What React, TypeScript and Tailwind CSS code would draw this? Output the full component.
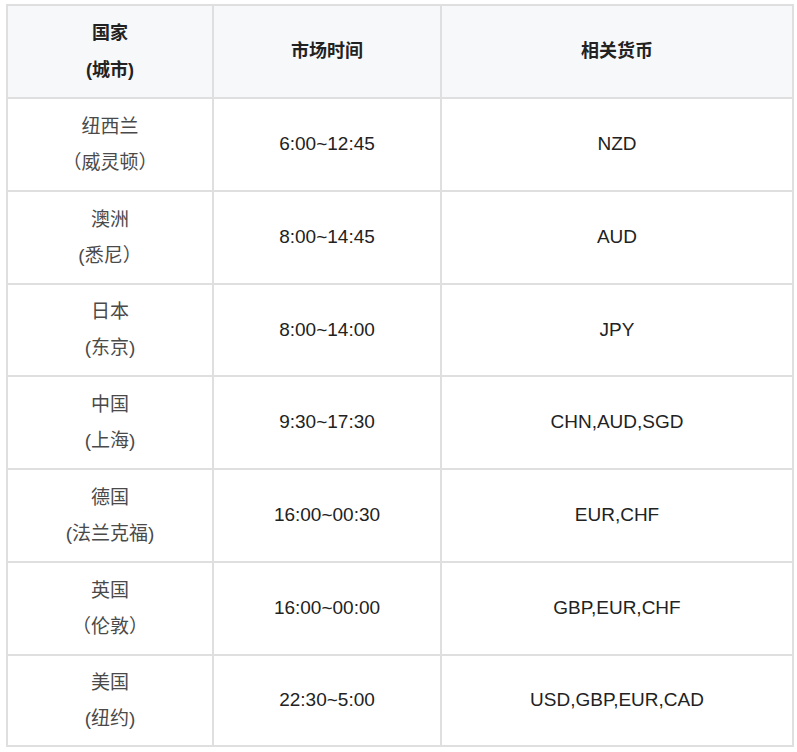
const rows = [
  { country: '纽西兰', city: '（威灵顿）', hours: '6:00~12:45', currency: 'NZD', h: 'h-[93px]' },
  { country: '澳洲', city: '(悉尼）', hours: '8:00~14:45', currency: 'AUD', h: 'h-[93px]' },
  { country: '日本', city: '(东京)', hours: '8:00~14:00', currency: 'JPY', h: 'h-[92px]' },
  { country: '中国', city: '(上海)', hours: '9:30~17:30', currency: 'CHN,AUD,SGD', h: 'h-[93px]' },
  { country: '德国', city: '(法兰克福)', hours: '16:00~00:30', currency: 'EUR,CHF', h: 'h-[93px]' },
  { country: '英国', city: '（伦敦）', hours: '16:00~00:00', currency: 'GBP,EUR,CHF', h: 'h-[93px]' },
  { country: '美国', city: '(纽约)', hours: '22:30~5:00', currency: 'USD,GBP,EUR,CAD', h: 'h-[91px]' },
];

export default function App() {
  return (
    <div className="min-h-screen bg-white pl-[6px] pt-[4px] font-['Liberation_Sans','Noto_Sans_CJK_SC',sans-serif] text-[19px]">
      <table className="w-[786px] table-fixed border-collapse text-center">
        <colgroup>
          <col className="w-[206px]" />
          <col className="w-[228px]" />
          <col className="w-[352px]" />
        </colgroup>
        <thead>
          <tr className="h-[93px] bg-[#f6f8fa] text-[18px] font-bold text-[#222]">
            <th className="border-2 border-[#dfdfdf] align-middle">
              <div className="leading-[37px]">国家</div>
              <div className="leading-[37px]">(城市)</div>
            </th>
            <th className="border-2 border-[#dfdfdf] align-middle">市场时间</th>
            <th className="border-2 border-[#dfdfdf] align-middle">相关货币</th>
          </tr>
        </thead>
        <tbody>
          {rows.map((r) => (
            <tr key={r.country} className={r.h}>
              <td className="border-2 border-[#dfdfdf] align-middle">
                <div className="leading-[36px] text-[#4a4a4a]">{r.country}</div>
                <div className="leading-[36px] text-[#4a4a4a]">{r.city}</div>
              </td>
              <td className="border-2 border-[#dfdfdf] align-middle text-[#222]">{r.hours}</td>
              <td className="border-2 border-[#dfdfdf] align-middle text-[#222]">{r.currency}</td>
            </tr>
          ))}
        </tbody>
      </table>
    </div>
  );
}
